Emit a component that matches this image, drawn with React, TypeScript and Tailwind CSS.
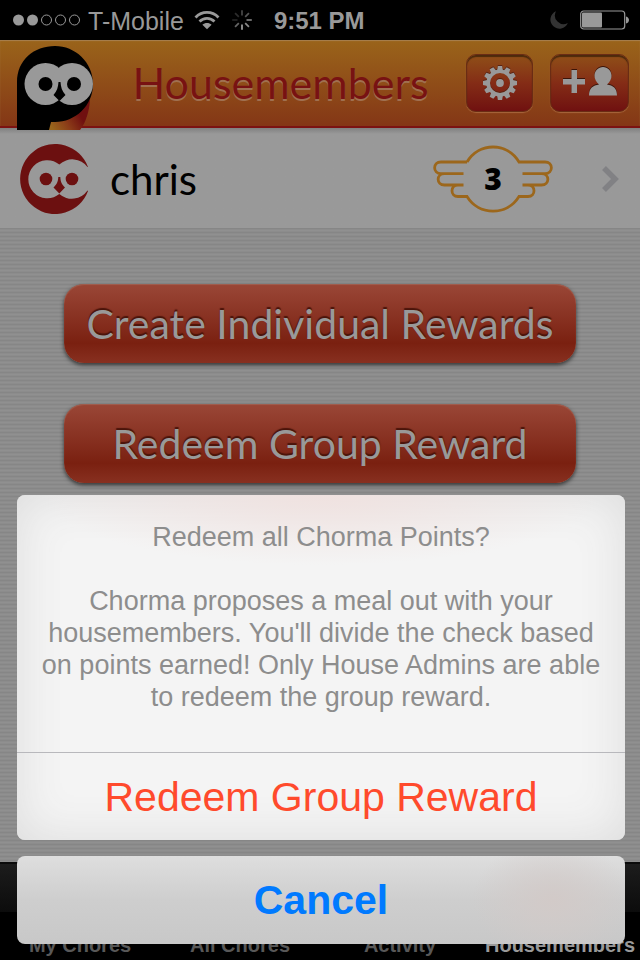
import React from "react";

const tabs = [
  { label: "My Chores", active: false },
  { label: "All Chores", active: false },
  { label: "Activity", active: false },
  { label: "Housemembers", active: true },
];

function WifiIcon() {
  return (
    <svg width="26" height="20" viewBox="0 0 26 20" fill="none" stroke="#999" strokeWidth="2.8" aria-hidden="true">
      <path d="M1.5 7.4C8 .8 18 .8 24.500 7.400" />
      <path d="M5.500 11.600C9.800 7.400 16.200 7.400 20.500 11.600" />
      <path d="M8.400 14.800C11 12.400 15 12.400 17.600 14.800L13 19.200Z" fill="#999" stroke="none" />
    </svg>
  );
}

const spokes = [
  { angle: 0, tone: "#444" },
  { angle: 45, tone: "#555" },
  { angle: 90, tone: "#777" },
  { angle: 135, tone: "#8a8a8a" },
  { angle: 180, tone: "#999" },
  { angle: 225, tone: "#666" },
  { angle: 270, tone: "#222" },
  { angle: 315, tone: "#2c2c2c" },
];

function Spinner() {
  return (
    <svg width="20" height="20" viewBox="-10 -10 20 20" aria-hidden="true">
      {spokes.map((s) => (
        <path key={s.angle} d="M0-4.500V-9.800" stroke={s.tone} strokeWidth="1.800" transform={`rotate(${s.angle})`} />
      ))}
    </svg>
  );
}

function StatusBar() {
  return (
    <div className="flex h-10 items-center bg-black pr-[11px] pl-3 text-[#999]">
      <svg width="70" height="14" viewBox="0 0 70 14" aria-hidden="true">
        <circle cx="6.500" cy="7" r="5.500" fill="#999" />
        <circle cx="20.500" cy="7" r="5.500" fill="#999" />
        {[34.5, 48.5, 62.5].map((x) => (
          <circle key={x} cx={x} cy="7" r="5" fill="none" stroke="#999" />
        ))}
      </svg>
      <span className="ml-1.5 pt-0.5 text-[25px] leading-8">T-Mobile</span>
      <span className="ml-2.5">
        <WifiIcon />
      </span>
      <span className="ml-3">
        <Spinner />
      </span>
      <span className="ml-[22px] pt-0.5 text-[24px] leading-8 font-bold">9:51 PM</span>
      <div className="ml-auto flex items-center gap-3">
        <svg width="18" height="18" viewBox="0 0 18 18" aria-hidden="true">
          <path d="M6 .3A9 9 0 1 0 17.800 11.900A8.600 8.600 0 0 1 6 .3Z" fill="#333" />
        </svg>
        <svg width="49" height="20" viewBox="0 0 49 20" aria-hidden="true">
          <rect x=".7" y="1" width="44" height="18" rx="3" fill="none" stroke="#999" strokeWidth="1.200" />
          <rect x="2" y="2.500" width="20" height="15" rx="1" fill="#999" />
          <path d="M46 6.500C48 7 49 8.500 49 10S48 13 46 13.500Z" fill="#999" />
        </svg>
      </div>
    </div>
  );
}

function OwlLogo() {
  return (
    <svg width="78" height="84" viewBox="0 0 78 84" role="img" aria-label="Chorma">
      <defs>
        <linearGradient id="tail" x1="36" y1="84" x2="62" y2="68" gradientUnits="userSpaceOnUse">
          <stop offset="0" stopColor="#99661c" />
          <stop offset=".5" stopColor="#8b3c18" />
          <stop offset="1" stopColor="#701010" />
        </linearGradient>
      </defs>
      <path d="M31 84L35 72L73 54C72 66 69 76 63 84Z" fill="url(#tail)" />
      <path d="M0 84V36C0 14 17 0 38 0C58 0 76 16 76 38C76 60 58 76 38 76H34L32 84Z" fill="#000" />
      <g fill="#999">
        <circle cx="28.500" cy="38" r="21" />
        <circle cx="55" cy="38" r="21" />
      </g>
      <circle cx="28.500" cy="38" r="7" />
      <circle cx="57" cy="38" r="7" />
      <path d="M41.500 36H43.500C43.800 41 45 45 48.500 49L42.500 55L36.500 49C40 45 41.200 41 41.500 36Z" />
    </svg>
  );
}

function OwlAvatar() {
  return (
    <svg width="70" height="70" viewBox="0 0 70 70" role="img" aria-label="chris">
      <path d="M68 23A35 35 0 1 0 68 47L67.500 46.500A19 19 0 0 1 39.300 50A19 19 0 1 1 39.300 20.500A19 19 0 0 1 67.500 23Z" fill="#6c1010" />
      <circle cx="26" cy="35" r="6.300" fill="#6c1010" />
      <circle cx="52" cy="35" r="6.300" fill="#6c1010" />
      <path d="M38.300 33H40.300C40.600 38 41.500 40 45 43.500L39.300 49.500L33.500 43.500C37 40 38 38 38.300 33Z" fill="#6c1010" />
    </svg>
  );
}

function GearIcon() {
  return (
    <svg width="34" height="36" viewBox="-17 -18 34 36" aria-hidden="true">
      {["#5a2412", "#999"].map((tone, i) => (
        <g key={tone} transform={`translate(0 ${i - 1})`} stroke={tone} fill="none">
          <circle r="11.800" strokeWidth="3.600" />
          <circle r="3.900" fill={tone} stroke="none" />
          {[0, 30, 60, 90, 120, 150, 180, 210, 240, 270, 300, 330].map((a) => (
            <path key={a} d="M-2.900-12.500L-2.100-17H2.100L2.900-12.500Z" fill={tone} stroke="none" transform={`rotate(${a})`} />
          ))}
        </g>
      ))}
    </svg>
  );
}

function AddPersonIcon() {
  const shape = "M0 12H8.500V3H14V12H22V17.500H14V26H8.500V17.500H0ZM26 28.500C26 21 30 18.500 36 17.500C33 15 31.500 12 31.500 8.800C31.500 3.500 35.500 0 40 0S48.500 3.500 48.500 8.800C48.500 12 47 15 44 17.500C50 18.500 54 21 54 28.500Z";
  return (
    <svg width="54" height="30" viewBox="0 0 54 30" className="mb-1 shrink-0" aria-hidden="true">
      <path d={shape} fill="#3c1408" />
      <path d={shape} fill="#999" transform="translate(0 1)" />
    </svg>
  );
}

function NavButton({ label, width, children }: { label: string; width: string; children: React.ReactNode }) {
  return (
    <button
      type="button"
      aria-label={label}
      className={`${width} flex h-[58px] items-center justify-center rounded-[10px] border border-[#6a2c14] bg-linear-to-b from-[#8f4f18] via-[#842c16] to-[#701010] shadow-[inset_0_2px_1px_#4c2a0c,0_1px_1px_#a8663c]`}
    >
      {children}
    </button>
  );
}

function WingBadge({ count }: { count: number }) {
  return (
    <div className="grid h-[68px] w-[120px] place-items-center">
      <svg className="col-start-1 row-start-1" width="120" height="68" viewBox="0 0 120 68" fill="none" stroke="#9c671c" strokeWidth="2.800" aria-hidden="true">
        <path d="M34 17H8C-.5 17-.5 28.700 8 28.700H30.500M11.500 28.700C3 28.700 3 40 11.500 40H30.500M25 40C17 40 17 51.500 25 51.500H34C46 71 74 71 86 51.500H95C103 51.500 103 40 95 40M89.500 40H108.500C117 40 117 28.700 108.500 28.700M89.500 28.700H112C120.500 28.700 120.500 17 112 17H86C74-3 46-3 34 17" />
      </svg>
      <span className="col-start-1 row-start-1 font-['Open_Sans','Noto_Sans',sans-serif] text-[30px] leading-8 font-extrabold text-black">{count}</span>
    </div>
  );
}

function RewardButton({ children }: { children: React.ReactNode }) {
  return (
    <button
      type="button"
      className="h-[79px] w-full rounded-[20px] bg-linear-to-b from-[#984434] from-5% via-[#7a2010] via-75% to-[#883020] font-[Lato,sans-serif] text-[41px] leading-[48px] whitespace-nowrap text-[#999] shadow-[inset_0_1px_1px_#a06050,0_2px_4px_#333] [text-shadow:0_-2px_1px_#4a140a]"
    >
      {children}
    </button>
  );
}

function ActionSheet() {
  return (
    <div role="dialog" aria-modal="true" aria-label="Redeem all Chorma Points?" className="absolute inset-x-0 bottom-0 flex flex-col gap-4 pr-[15px] pb-4 pl-[17px]">
      <div className="overflow-hidden rounded-lg bg-[#f4f4f4] shadow-[inset_0_0_48px_#dcdcdc]">
        <div className="border-b border-[#b8b8bc] bg-[radial-gradient(280px_70px_at_50%_0,#f0e2e0,transparent)] px-5 pt-[26px] pb-[39px] text-center text-[27px] leading-8 text-[#8d8d8d]">
          <p>Redeem all Chorma Points?</p>
          <p className="mt-8">
            Chorma proposes a meal out with your housemembers. You'll divide the check based on points earned! Only House Admins are able to redeem the group reward.
          </p>
        </div>
        <button type="button" className="h-[87px] w-full text-[41px] leading-[48px] text-[#ff4a2c]">
          Redeem Group Reward
        </button>
      </div>
      <button type="button" className="h-[88px] w-full rounded-lg bg-[radial-gradient(80px_60px_at_88%_50%,#d2cac8,transparent),linear-gradient(#dedede,#cecece_50%,#c8c8c8)] text-[41px] leading-[48px] font-bold text-[#007aff]">
        Cancel
      </button>
    </div>
  );
}

export default function App() {
  return (
    <div className="relative flex min-h-screen flex-col overflow-hidden bg-[#8c8c8c] font-['Liberation_Sans',Arial,sans-serif]">
      <StatusBar />
      <header className="flex h-[88px] items-start border-b-2 border-[#7c1212] bg-linear-to-b from-[#9a641a] to-[#843616] pr-[11px] pl-[17px] shadow-[inset_0_1px_1px_#a88050]">
        <div className="relative z-10 mt-1.5 h-[84px] w-[78px] shrink-0">
          <OwlLogo />
        </div>
        <h1 className="flex-1 pt-[14px] text-center font-[Lato,sans-serif] text-[43px] leading-[58px] text-[#781212] [text-shadow:0_2px_0_#a07050]">Housemembers</h1>
        <div className="flex gap-[17px] pt-[14px]">
          <NavButton label="Settings" width="w-[67px]">
            <GearIcon />
          </NavButton>
          <NavButton label="Add housemember" width="w-[79px]">
            <AddPersonIcon />
          </NavButton>
        </div>
      </header>
      <a href="#chris" className="flex h-[100px] items-center bg-linear-to-b from-[#808080] to-[#999] to-6% px-5 pt-0.5">
        <OwlAvatar />
        <span className="ml-5 font-[Lato,sans-serif] text-[42px] leading-[48px] text-black">chris</span>
        <span className="ml-auto">
          <WingBadge count={3} />
        </span>
        <svg className="ml-12" width="19" height="28" viewBox="0 0 19 28" fill="none" stroke="#818184" strokeWidth="5.500" aria-hidden="true">
          <path d="M3 3L14 14L3 25" />
        </svg>
      </a>
      <main className="flex flex-1 flex-col gap-[41px] bg-[repeating-linear-gradient(#868686_0_1px,#8c8c8c_1px_2px,#909090_2px_3px,#8c8c8c_3px_4px)] px-16 pt-14">
        <RewardButton>Create Individual Rewards</RewardButton>
        <RewardButton>Redeem Group Reward</RewardButton>
      </main>
      <nav className="grid h-[98px] grid-cols-4 border-t-2 border-[#0a0a0a] bg-[linear-gradient(#1c1c1c,#0c0c0c_48px,#000_48px)]">
        {tabs.map((t) => (
          <a key={t.label} href="#tab" className={`flex items-end justify-center pb-[3px] text-[20px] leading-6 font-bold ${t.active ? "text-[#999]" : "text-[#585858]"}`}>
            {t.label}
          </a>
        ))}
      </nav>
      <ActionSheet />
    </div>
  );
}
